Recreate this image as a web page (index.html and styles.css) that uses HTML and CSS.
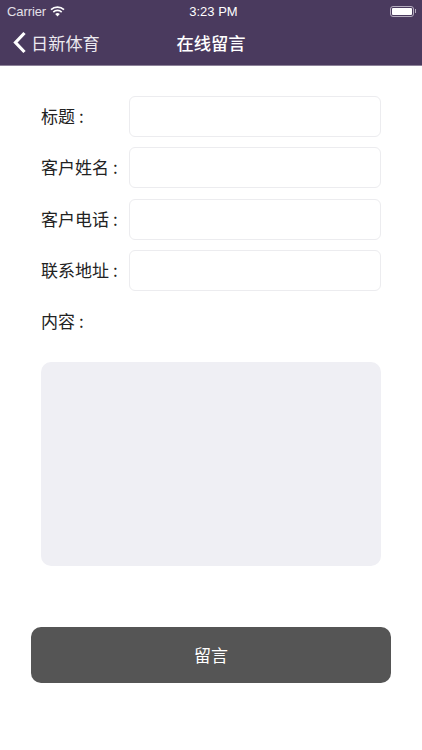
FILE: index.html
```html
<!DOCTYPE html>
<html lang="zh-CN">
<head>
    <meta charset="UTF-8" />
    <meta name="viewport" content="width=device-width, initial-scale=1.0">
    <title>在线留言</title>
    <link rel="stylesheet" href="styles.css">
</head>
<body>
<div class="header">
    <div class="status-bar">
        <div class="status-left">
            <span class="carrier">Carrier</span>
            <svg class="wifi" width="15" height="11" viewBox="0 0 15 11">
                <path d="M7.5 10.6 L5.2 8.1 A3.4 3.4 0 0 1 9.8 8.1 Z" fill="#fff"/>
                <path d="M3.3 6.1 A6.2 6.2 0 0 1 11.7 6.1" fill="none" stroke="#fff" stroke-width="1.7"/>
                <path d="M1 3.6 A9.6 9.6 0 0 1 14 3.6" fill="none" stroke="#fff" stroke-width="1.7"/>
            </svg>
        </div>
        <div class="status-time">3:23 PM</div>
        <div class="status-right">
            <div class="battery"><div class="battery-level"></div></div>
            <div class="battery-cap"></div>
        </div>
    </div>
    <div class="nav-bar">
        <div class="nav-back">
            <svg width="14" height="23" viewBox="0 0 14 23">
                <path d="M11.5 2 L2.5 11.5 L11.5 21" fill="none" stroke="#fff" stroke-width="3.2"/>
            </svg>
            <span>日新体育</span>
        </div>
        <div class="nav-title">在线留言</div>
    </div>
</div>
<div class="form">
    <div class="field">
        <label>标题<span class="colon">:</span></label>
        <input class="field-input" type="text">
    </div>
    <div class="field">
        <label>客户姓名<span class="colon">:</span></label>
        <input class="field-input" type="text">
    </div>
    <div class="field">
        <label>客户电话<span class="colon">:</span></label>
        <input class="field-input" type="text">
    </div>
    <div class="field">
        <label>联系地址<span class="colon">:</span></label>
        <input class="field-input" type="text">
    </div>
    <div class="field">
        <label>内容<span class="colon">:</span></label>
    </div>
    <textarea class="content-box"></textarea>
</div>
<div class="submit">留言</div>
</body>
</html>
```

FILE: styles.css
```css
* {
    box-sizing: border-box;
    margin: 0;
    padding: 0;
}
html, body {
    background: #fff;
    height: 100%;
    overflow: hidden;
}
body {
    font-family: "Noto Sans CJK SC", "Liberation Sans", sans-serif;
    color: #222;
}
.header {
    height: 66px;
    background: #4a3a5e;
    border-bottom: 1px solid #8d8299;
    color: #fff;
}
.status-bar {
    height: 22px;
    display: flex;
    align-items: center;
    justify-content: space-between;
    padding: 0 6px 0 7px;
    font-family: "Liberation Sans", sans-serif;
    font-size: 13px;
}
.status-left {
    width: 124px;
    display: flex;
    align-items: center;
    gap: 6px;
}
.carrier {
    color: #e4e0e8;
    letter-spacing: -0.1px;
}
.wifi {
    margin-left: -2px;
    margin-top: 1px;
}
.status-right {
    width: 120px;
    display: flex;
    align-items: center;
    justify-content: flex-end;
}
.battery {
    width: 24px;
    height: 11px;
    border: 1px solid #b5adbf;
    border-radius: 3px;
    padding: 1px;
}
.battery-level {
    height: 100%;
    background: #fff;
    border-radius: 1px;
}
.battery-cap {
    width: 1px;
    height: 4px;
    margin-left: 1px;
    background: #b5adbf;
}
.nav-bar {
    height: 43px;
    display: flex;
    align-items: center;
    position: relative;
    padding-bottom: 2px;
}
.nav-back {
    display: flex;
    align-items: center;
    gap: 4px;
    padding-left: 13px;
    font-size: 17.2px;
    color: #ece9ef;
}
.nav-title {
    position: absolute;
    left: 0;
    right: 0;
    text-align: center;
    font-size: 17.3px;
    font-weight: 500;
}
.form {
    padding: 30px 41px 0;
}
.field {
    display: flex;
    align-items: center;
    height: 41px;
    margin-bottom: 10.3px;
}
.field label {
    width: 88px;
    flex-shrink: 0;
    font-size: 17px;
    padding-bottom: 2px;
}
.colon {
    margin-left: 4px;
}
.field-input {
    width: 252px;
    height: 41px;
    background: #fff;
    border: 1px solid #ececef;
    border-radius: 6px;
    outline: none;
}
.content-box {
    display: block;
    width: 340px;
    height: 204px;
    margin-top: 20px;
    background: #efeff4;
    border: none;
    border-radius: 10px;
    resize: none;
}
.submit {
    width: 360px;
    height: 56px;
    margin: 61px 0 0 31px;
    background: #555;
    border-radius: 10px;
    color: #fff;
    font-size: 17px;
    display: flex;
    align-items: center;
    justify-content: center;
    padding-bottom: 2px;
}
```
